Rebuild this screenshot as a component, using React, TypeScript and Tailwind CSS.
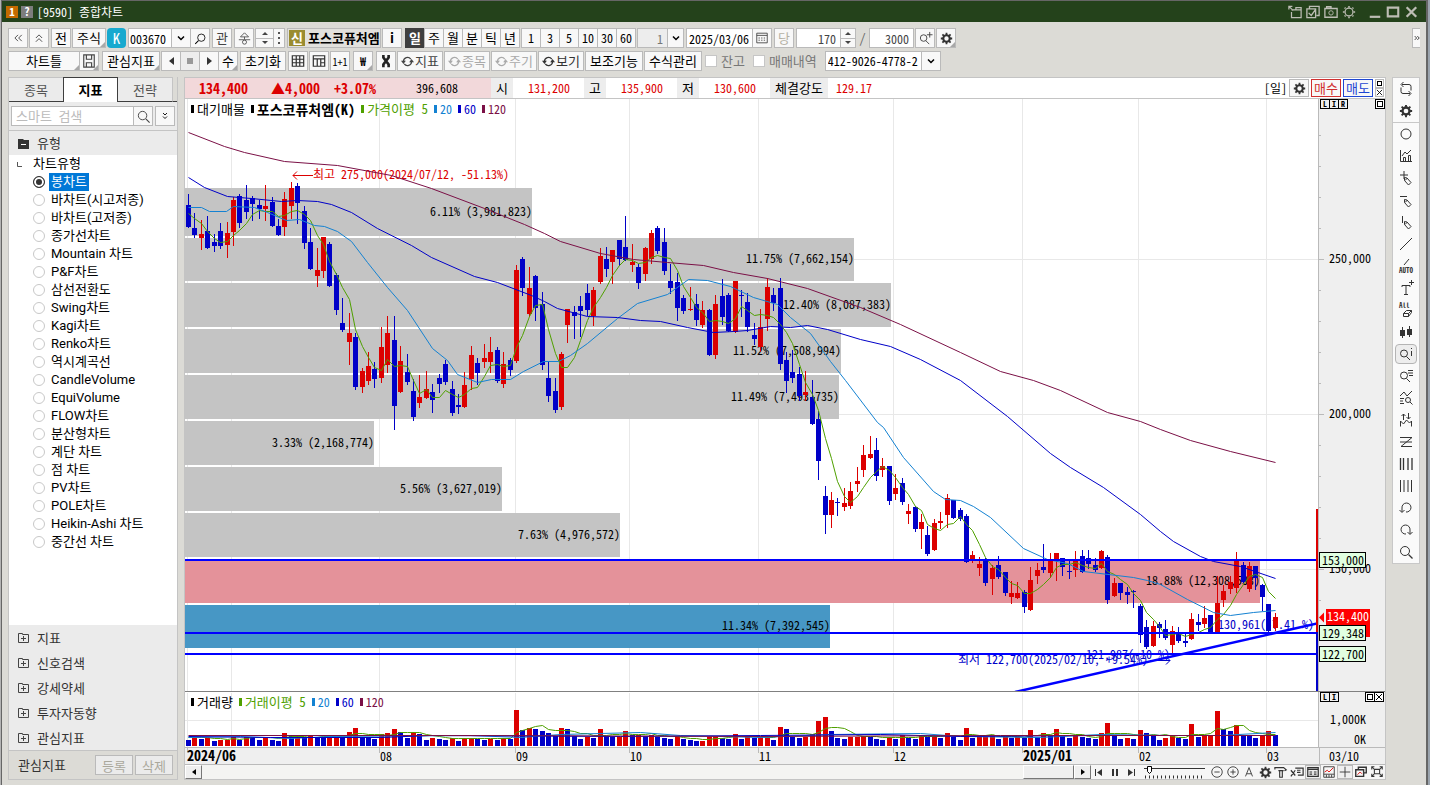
import { useState, type ReactNode } from "react";
import { clsx } from "clsx";
import { twMerge } from "tailwind-merge";

// [rising, high, body top, body bottom, low], y positions on the plot
type Candle = [number, number, number, number, number];

const CANDLES: Candle[] = [
  [0,194,205,227,227],[0,213,228,235,237],[1,220,234,238,249],[0,216,231,248,248],[0,234,242,246,251],
  [0,223,231,246,248],[1,222,233,245,257],[1,197,200,232,245],[0,194,196,223,227],[0,185,200,212,218],
  [0,196,198,204,220],[0,200,205,209,218],[1,185,206,209,220],[0,197,202,226,226],[0,219,226,235,235],
  [1,192,199,227,235],[1,182,188,206,218],[0,183,186,203,223],[0,206,211,243,248],[0,228,242,269,269],
  [1,248,270,276,286],[1,237,237,271,277],[0,242,244,286,286],[0,273,275,310,314],[0,298,323,330,331],
  [1,313,333,342,364],[0,333,337,387,389],[1,368,371,387,392],[1,352,366,381,384],[0,362,369,379,387],
  [1,327,347,378,382],[1,316,333,365,372],[0,316,340,406,429],[1,346,361,392,392],[0,354,372,382,384],
  [0,379,391,417,420],[1,375,397,403,407],[1,371,389,398,398],[0,384,392,400,412],[0,374,378,384,392],
  [0,360,364,382,384],[0,381,389,413,415],[0,394,405,407,413],[1,372,385,407,407],[1,346,355,379,389],
  [0,358,363,373,384],[1,344,358,362,367],[1,337,352,362,372],[0,347,350,381,382],[1,352,364,384,387],
  [0,358,360,370,375],[1,265,270,361,362],[0,257,259,288,295],[1,267,288,314,316],[0,275,276,308,320],
  [0,292,304,365,369],[0,361,378,396,401],[0,378,391,410,412],[1,352,354,407,409],[1,309,309,325,342],
  [0,306,312,316,338],[0,296,306,311,336],[0,284,293,310,315],[1,287,290,316,325],[1,248,256,282,283],
  [0,247,259,269,276],[1,250,250,262,283],[0,240,240,259,265],[0,216,247,260,260],[1,244,262,265,271],
  [0,264,267,283,288],[1,247,248,274,280],[1,230,233,259,263],[0,226,228,251,253],[0,228,242,271,274],
  [0,264,281,288,293],[0,273,282,308,320],[0,295,298,311,313],[1,287,309,310,310],[0,294,304,320,325],
  [1,301,310,325,327],[0,309,310,355,355],[1,295,304,355,358],[0,279,296,317,324],[0,293,295,331,331],
  [1,281,281,332,332],[0,290,295,296,316],[0,293,302,327,331],[0,323,335,339,344],[1,309,327,347,351],
  [1,278,287,319,330],[0,288,295,303,310],[0,278,288,364,369],[0,352,360,381,392],[0,350,372,378,382],
  [0,367,374,396,400],[1,371,392,395,400],[0,380,397,424,424],[0,411,419,461,479],[0,486,496,515,533],
  [1,492,500,515,527],[0,498,502,503,515],[1,488,503,507,510],[1,482,491,506,508],[1,467,481,484,491],
  [1,445,455,470,476],[1,436,454,458,458],[0,438,450,476,480],[1,458,466,470,476],[0,466,466,501,504],
  [1,474,488,494,499],[0,478,483,502,504],[1,504,511,514,523],[0,506,507,529,531],[1,514,522,529,548],
  [0,526,535,554,555],[1,519,523,550,550],[1,512,521,523,528],[1,494,498,515,527],[0,500,500,518,518],
  [0,508,510,519,520],[0,514,516,562,562],[1,551,555,560,562],[1,557,564,568,575],[0,558,561,583,585],
  [1,565,568,579,594],[0,556,565,577,578],[0,572,572,593,595],[1,581,593,597,603],[1,582,593,598,598],
  [0,590,592,607,612],[1,567,580,610,610],[1,563,570,576,583],[0,544,567,570,572],[1,553,560,573,577],
  [1,553,553,560,580],[0,558,558,567,575],[0,561,571,572,578],[1,551,560,570,576],[0,550,556,572,572],
  [0,550,558,564,568],[0,558,565,570,571],[1,550,551,568,568],[0,555,557,600,603],[1,578,583,596,596],
  [0,583,583,593,599],[0,587,592,595,603],[0,590,591,592,607],[0,604,606,635,642],[0,620,627,647,648],
  [1,621,626,646,646],[0,622,624,628,637],[0,620,629,638,639],[1,626,631,645,654],[0,627,632,641,642],
  [0,633,641,643,646],[1,613,619,639,639],[0,614,622,625,630],[1,606,618,624,627],[0,615,615,632,632],
  [1,576,603,632,632],[1,585,591,600,606],[1,576,582,589,593],[1,552,560,588,592],[0,562,565,582,582],
  [1,562,566,589,591],[0,566,566,578,589],[0,584,585,597,610],[0,604,604,631,632],[1,613,617,628,630],
];

const VOLUMES = [
  6,9,7,8,5,6,6,9,6,9,8,6,9,6,5,13,10,10,9,10,9,8,9,9,8,14,18,9,8,7,12,13,17,14,8,14,12,6,8,7,
  6,8,5,8,8,7,6,7,6,8,7,36,16,18,17,15,13,10,18,17,10,7,9,8,17,10,9,9,15,11,11,10,11,9,8,7,9,7,6,5,
  5,9,9,8,7,12,7,9,8,9,9,6,19,17,9,8,9,12,25,29,15,8,7,9,9,10,9,7,6,9,7,11,8,7,10,9,10,8,13,9,
  6,18,8,9,9,10,7,9,8,9,8,16,9,13,10,17,10,8,10,9,8,7,13,23,10,7,8,7,16,13,10,6,8,10,8,7,22,9,10,11,
  35,17,15,21,11,10,8,11,15,11,
];

const MA20 = "188,207 201,207 209,211 226,211 233,206 254,207 267,212 286,220 299,219 314,225 324,226 337,231 351,241 367,262 387,287 407,310 432,348 447,360 457,374 477,382 491,379 510,379 523,371 543,361 558,361 570,355 587,343 617,318 637,303 667,294 688,279 707,280 730,286 753,297 777,304 790,317 810,333 830,361 845,380 877,422 883,427 903,457 933,491 945,499 960,500 973,506 990,517 1023,548 1047,559 1067,563 1083,571 1133,577 1147,580 1160,584 1187,599 1213,612 1230,615 1253,612 1275,610";
const MA60 = "188,177 204,187 227,196 251,198 281,201 297,200 317,201 331,204 351,212 377,228 411,245 431,257 474,276 497,282 531,295 544,301 557,308 587,316 617,317 640,320 660,321 687,327 713,332 733,331 747,330 770,326 790,327 807,325 827,329 860,339 890,346 920,359 960,380 1007,416 1050,453 1070,467 1103,487 1140,514 1160,531 1173,541 1200,556 1213,561 1240,566 1275,578";
const MA120 = "188,132 224,146 244,152 284,161 337,165 391,175 431,188 484,208 524,224 544,233 560,241 600,253 633,259 667,262 703,265 733,272 767,278 807,288 860,307 900,324 960,352 1000,371 1033,380 1060,390 1107,412 1140,421 1160,429 1190,440 1230,451 1275,462";

const BANDS = [
  { y: 188, h: 48, end: 532, label: "6.11% (3,981,823)" },
  { y: 238, h: 43, end: 854, label: "11.75% (7,662,154)" },
  { y: 283, h: 44, end: 891, label: "12.40% (8,087,383)" },
  { y: 329, h: 44, end: 841, label: "11.52% (7,508,994)" },
  { y: 375, h: 44, end: 839, label: "11.49% (7,493,735)" },
  { y: 421, h: 44, end: 374, label: "3.33% (2,168,774)" },
  { y: 467, h: 44, end: 502, label: "5.56% (3,627,019)" },
  { y: 513, h: 44, end: 620, label: "7.63% (4,976,572)" },
  { y: 559, h: 44, end: 1260, label: "18.88% (12,308,533)", fill: "#e4929a" },
  { y: 605, h: 43, end: 830, label: "11.34% (7,392,545)", fill: "#4797c5" },
];

const MONTHS = [231, 379, 515, 629, 758, 893, 1022, 1138, 1266];
const DATES = [
  { x: 187, label: "2024/06", year: true },
  { x: 380, label: "08" },
  { x: 516, label: "09" },
  { x: 630, label: "10" },
  { x: 759, label: "11" },
  { x: 894, label: "12" },
  { x: 1023, label: "2025/01", year: true },
  { x: 1139, label: "02" },
  { x: 1267, label: "03" },
];

const RED = "#dc0000";
const BLUE = "#0000c8";
const GREEN = "#4fa000";
const CYAN = "#1482d2";
const WINE = "#7b1046";
const LINE = "#0000ff";

const candleX = (i: number) => 188 + Math.round(i * 6.43);

function average(values: number[], size: number, lead: number) {
  const padded = [...Array(size - 1).fill(lead), ...values];
  return values.map((_, i) => padded.slice(i, i + size).reduce((a, b) => a + b, 0) / size);
}

const MA5 = average(CANDLES.map(([up, , top, bottom]) => (up ? top : bottom)), 5, 210)
  .map((y, i) => `${candleX(i)},${Math.round(y)}`)
  .join(" ");
const VOL5 = average(VOLUMES, 5, 9)
  .map((v, i) => `${candleX(i)},${Math.round(745 - v)}`)
  .join(" ");

/* ---------- icons ---------- */

function Icon({ size = 16, children }: { size?: number; children: ReactNode }) {
  return (
    <svg width={size} height={size} viewBox="0 0 16 16" fill="none" stroke="currentColor" className="shrink-0" aria-hidden="true">
      {children}
    </svg>
  );
}

const Gear = ({ size = 14 }: { size?: number }) => (
  <Icon size={size}>
    <circle cx="8" cy="8" r="4" strokeWidth="2.6" />
    <path d="M8 1v3M8 12v3M1 8h3M12 8h3M3 3l2 2M11 11l2 2M3 13l2-2M11 5l2-2" strokeWidth="2.2" />
  </Icon>
);
const Search = ({ size = 16 }: { size?: number }) => (
  <Icon size={size}><circle cx="7" cy="7" r="4.5" /><path d="M10.500 10.500l4 4" strokeWidth="1.300" /></Icon>
);
const Chevron = () => <Icon size={12}><path d="M4 6l4 4 4-4" strokeWidth="2" /></Icon>;
const Cycle = () => (
  <Icon size={13}>
    <path d="M3 8a5 5 0 0 1 9-3M13 8a5 5 0 0 1-9 3" strokeWidth="1.600" />
    <path d="M0 7h6L3 11zM10 9h6l-3-4z" fill="currentColor" stroke="none" />
  </Icon>
);
const Pencil = () => <path d="M6.500 7.500v3l4 4.500 2.500-2.500-4-4.500zM7 10.500l2.500-2.500" />;
const MiniSearch = () => <><circle cx="6" cy="7.500" r="3.500" /><path d="M8.500 10.500L12 14" /></>;

const SIDE_ICONS: { name: string; icon: ReactNode }[] = [
  { name: "새로고침", icon: <Icon><path d="M4 3.500h7q2 0 2 2v4M3 6.500v4q0 2 2 2h7M5.500 1L3 3.500 5.500 6M10.500 10l2.500 2.500-2.500 2.500" /></Icon> },
  { name: "설정", icon: <Gear /> },
  { name: "원", icon: <Icon><circle cx="8" cy="8" r="5" /></Icon> },
  { name: "차트", icon: <Icon><path d="M2.500 2v11.500H14M5.500 13V9.500h2V13M10.500 13V7.500h2V13M4 8l3-4 2 2 4-4" /></Icon> },
  { name: "십자선", icon: <Icon><path d="M6 1v8M2 5h8" /><Pencil /></Icon> },
  { name: "수평선", icon: <Icon><path d="M2 4.500h7" /><Pencil /></Icon> },
  { name: "수직선", icon: <Icon><path d="M4.500 2v7" /><Pencil /></Icon> },
  { name: "추세선", icon: <Icon><path d="M2 14L14 2" /></Icon> },
  { name: "자동추세선", icon: <Icon><path d="M6 7l5-6" /><text x="8" y="15" textAnchor="middle" fontSize="7" fontWeight="700" fill="currentColor" stroke="none">AUTO</text></Icon> },
  { name: "문자", icon: <Icon><path d="M4 7V5.500h8V7M8 5.500V14M6 14.500h4M13.500 0v5M11 2.500h5" /></Icon> },
  { name: "모두 지우기", icon: <Icon><text x="1" y="6" fontSize="7" fontWeight="700" fill="currentColor" stroke="none">All</text><path d="M5.500 11.500l3-3h5l-3 3zM5.500 11.500v3h5v-3M13.500 8.500v2l-3 4" /></Icon> },
  { name: "봉", icon: <Icon><path d="M4.500 3v11M11.500 2v11" /><path d="M2 6h5v6H2zM9 5h5v6H9z" fill="currentColor" stroke="none" /></Icon> },
  { name: "정보", icon: <Icon><MiniSearch /><path d="M13.500 2v1M13.500 5v5" /></Icon> },
  { name: "목록", icon: <Icon><MiniSearch /><path d="M10 2.500h5M10 5h5M11 7.500h4" /></Icon> },
  { name: "지표찾기", icon: <Icon><path d="M2 6l4-4 3 4 5-5M2 8.500h4M2 11h3M2 13.500h4" /><circle cx="10" cy="10" r="2.500" /><path d="M12 12l2.500 2.500" /></Icon> },
  { name: "패턴", icon: <Icon><path d="M2.500 14.500V9l3 3 3-4 3 3 2-2v5.500M5.500 8V2M3.500 4l2-2 2 2M10.500 1v6M8.500 5l2 2 2-2" /></Icon> },
  { name: "파동", icon: <Icon><path d="M2 3.500h12L3 12.500h11M2 8h12" /></Icon> },
  { name: "기간", icon: <Icon><path d="M2.500 2v12M5.500 2v12M10 2v12M14 2v12" strokeWidth="1.300" /></Icon> },
  { name: "등간격", icon: <Icon><path d="M2.500 2v12M6 2v12M10 2v12M13.500 2v12" /></Icon> },
  { name: "되돌리기", icon: <Icon><path d="M4 12V8a4.500 4.500 0 1 1 4 4M1.500 10L4 12.500 6.500 10" /></Icon> },
  { name: "다시하기", icon: <Icon><path d="M12 12V8a4.500 4.500 0 1 0-4 4M9.500 10l2.500 2.500 2.500-2.500" /></Icon> },
  { name: "확대", icon: <Search /> },
];

const BOTTOM_ICONS: { name: string; icon: ReactNode; on?: boolean }[] = [
  { name: "축소", icon: <Icon size={14}><circle cx="8" cy="8" r="6" /><path d="M5 8h6" /></Icon> },
  { name: "확대", icon: <Icon size={14}><circle cx="8" cy="8" r="6" /><path d="M5 8h6M8 5v6" /></Icon> },
  { name: "글자", icon: <Icon size={14}><path d="M4 13l4-10 4 10M5.500 10h5" /></Icon> },
  { name: "설정", icon: <Gear size={13} /> },
  { name: "도구", icon: <Icon size={14}><path d="M1 5V3h10l3 2.500-2 1M5 6.500h6M6.500 6.500v7.500h3V6.500" strokeWidth="1.300" /></Icon> },
  { name: "지우기", icon: <Icon size={14}><path d="M6 3.500h9v8H9M1 6l5 6M6 6l-5 7M8 6h4M8 8.500h4" strokeWidth="1.400" /></Icon> },
  { name: "데이터", on: true, icon: <Icon size={14}><path d="M2 3h12v10H2zM2 5h12M4 8h3M4 10.500h3M9 8h3M9 10.500h3" strokeWidth="1.400" /></Icon> },
  { name: "차트", icon: <Icon size={14}><path d="M2 2h12v12H2zM2 10.500h12M5 11v3M8 11v3M11 11v3" /><path d="M3 8l3-2 2 2 5-5" stroke="#dc0000" /></Icon> },
  { name: "십자", on: true, icon: <Icon size={14}><path d="M8 2v12M2 8h12" /></Icon> },
  { name: "겹치기", icon: <Icon size={14}><path d="M5 5V2.500h9V9h-3M2 5.500h9V13H2z" strokeWidth="1.600" /><path d="M4 11l3-3 2 2" stroke="#dc0000" /></Icon> },
  { name: "전체화면", icon: <Icon size={14}><path d="M2 5V2h3M11 2h3v3M14 10v3h-3M5 13H2v-3M2 2l3 3M14 2l-3 3M2 13l3-3M14 13l-3-3M5 5h6v5H5z" strokeWidth="1.200" /></Icon> },
];

/* ---------- controls ---------- */

function Btn({ className, children, label, corner }: { className?: string; children?: ReactNode; label?: string; corner?: boolean }) {
  return (
    <button
      type="button"
      aria-label={label}
      className={twMerge("relative flex h-5 shrink-0 items-center justify-center border border-[#bababa] bg-[#f8f8f8] whitespace-nowrap", className)}
    >
      {children}
      {corner && (
        <svg width="5" height="5" className="absolute right-0 bottom-0" aria-hidden="true"><path d="M5 0v5H0z" fill="#a8a8a8" /></svg>
      )}
    </button>
  );
}

function Spinner({ className }: { className?: string }) {
  return (
    <div className={clsx("flex h-5 shrink-0 flex-col border border-[#bababa] bg-[#f8f8f8]", className)}>
      <button type="button" aria-label="증가" className="flex flex-1 items-center justify-center border-b border-[#bababa]">
        <svg width="6" height="4"><path d="M0 4l3-3 3 3z" fill="#444" /></svg>
      </button>
      <button type="button" aria-label="감소" className="flex flex-1 items-center justify-center">
        <svg width="6" height="4"><path d="M0 0l3 3 3-3z" fill="#444" /></svg>
      </button>
    </div>
  );
}

function TitleBar() {
  return (
    <header className="flex h-[22px] items-center border-t border-[#666] bg-[#24421b] pr-2 pl-1 text-white">
      <span className="flex h-3 w-3 items-center justify-center bg-[#c46a00] text-[11px] font-bold">1</span>
      <span className="ml-[3px] flex h-3 w-3 items-center justify-center bg-[#7d7d7d] text-[11px] font-bold">?</span>
      <h1 className="ml-1 text-[12px] leading-4">[9590] 종합차트</h1>
      <div className="ml-auto flex items-center gap-1 text-[#bdbdb5]">
        <button type="button" aria-label="창 분리"><Icon size={14}><path d="M4 5.500h11v9H4V8M9 5.500V3h6v2.500M1 5V1.500h4M1 1.500l5 5" strokeWidth="1.400" /></Icon></button>
        <button type="button" aria-label="선택"><Icon size={14}><path d="M1 4.500h10v10H1zM4 4V1.500h11V12h-3M3 9l3 3 5-7" strokeWidth="1.500" /></Icon></button>
        <button type="button" aria-label="화면 캡처"><Icon size={14}><path d="M1 4h14v10H1zM3 4V2h5v2" strokeWidth="1.500" /><circle cx="8" cy="9" r="2.500" /></Icon></button>
        <button type="button" aria-label="화면 설정">
          <Icon size={14}><circle cx="8" cy="8" r="4.500" strokeWidth="1.400" /><path d="M8 1v2M8 13v2M1 8h2M13 8h2M3 3l1 1M12 12l1 1M3 13l1-1M12 4l1-1" strokeWidth="1.800" /></Icon>
        </button>
        <button type="button" aria-label="최소화" className="ml-2"><Icon size={14}><path d="M2 13.500h12" strokeWidth="2.500" /></Icon></button>
        <button type="button" aria-label="최대화"><Icon size={14}><path d="M2 3h12v10H2z" strokeWidth="2.400" /></Icon></button>
        <button type="button" aria-label="닫기"><Icon size={14}><path d="M3 2.500l11 11M14 2.500l-11 11" strokeWidth="2.600" /></Icon></button>
      </div>
    </header>
  );
}

function Toolbars() {
  return (
    <div className="flex flex-col gap-[3px] px-[6px] pt-[6px] pb-[6px]">
      <div className="flex">
        <Btn className="w-5 text-[#555]" label="처음"><Icon size={10}><path d="M8 3L3 8l5 5M14 3L9 8l5 5" strokeWidth="1.600" /></Icon></Btn>
        <Btn className="ml-px w-5 text-[#555]" label="위로"><Icon size={10}><path d="M3 8l5-5 5 5M3 14l5-5 5 5" strokeWidth="1.600" /></Icon></Btn>
        <Btn className="ml-0.5 w-5">전</Btn>
        <Btn className="ml-px w-[34px]" corner>주식</Btn>
        <button type="button" className="mr-0.5 ml-px flex h-5 w-[19px] shrink-0 items-center justify-center rounded-sm bg-[#17a9cf] text-[15px] text-white">K</button>
        <input aria-label="종목코드" defaultValue="003670" className="h-5 w-11 shrink-0 border border-[#bababa] bg-white px-px text-[12px]" />
        <Btn className="-ml-px w-5" label="종목 목록"><Chevron /></Btn>
        <Btn className="-ml-px w-5" label="종목 검색"><span className="-scale-x-100"><Search size={13} /></span></Btn>
        <Btn className="ml-0.5 w-5 text-[#444]">관</Btn>
        <Btn className="ml-0.5 w-5 text-[#444]" label="순서">
          <Icon size={13}><path d="M8 1L3 6h10zM8 6v3M1 9.500h14" /><circle cx="8" cy="12.500" r="2.500" /></Icon>
        </Btn>
        <Spinner className="ml-px w-[19px]" />
        <Btn className="-ml-px w-3" label="더보기"><svg width="2" height="12"><path d="M0 0h2v2H0zM0 5h2v2H0zM0 10h2v2H0z" fill="#555" /></svg></Btn>
        <div className="ml-0.5 flex h-5 w-[94px] shrink-0 items-center overflow-hidden border border-[#bababa] bg-[#e2e1dd] whitespace-nowrap">
          <span className="ml-px flex h-4 w-4 shrink-0 items-center justify-center bg-[#9a8c30] font-bold text-white">신</span>
          <span className="ml-[3px] font-bold">포스코퓨처엠</span>
        </div>
        <Btn className="ml-px w-5 font-bold">i</Btn>
        <Btn className="ml-[3px] w-5 border-[#3e3e3e] bg-[#3e3e3e] font-bold text-white">일</Btn>
        {["주", "월", "분", "틱", "년"].map((t) => <Btn key={t} className="-ml-px w-5">{t}</Btn>)}
        <Btn className="ml-px w-5 text-[12px]">1</Btn>
        {["3", "5", "10", "30", "60"].map((t) => <Btn key={t} className="-ml-px w-5 text-[12px]">{t}</Btn>)}
        <input aria-label="분 단위" defaultValue="1" className="ml-px h-5 w-[31px] shrink-0 border border-[#bababa] bg-[#ededed] px-1 text-right text-[12px] text-[#777]" />
        <Btn className="-ml-px w-[17px]" label="분 목록"><Chevron /></Btn>
        <input aria-label="기준일" defaultValue="2025/03/06" className="ml-0.5 h-5 w-[67px] shrink-0 border border-[#bababa] bg-white px-0.5 text-[12px]" />
        <Btn className="-ml-px w-5 text-[#444]" label="달력">
          <Icon size={14}><path d="M2 2.500h12v11H2zM2 5h12" /><path d="M4 8h8M4 10.500h8" strokeDasharray="1.500 1.500" /></Icon>
        </Btn>
        <Btn className="ml-0.5 w-5 text-[#b5b1a5]">당</Btn>
        <input aria-label="봉 개수" defaultValue="170" className="ml-0.5 h-5 w-[45px] shrink-0 border border-[#bababa] bg-white px-1 text-right text-[12px] text-[#444]" />
        <Spinner className="-ml-px w-4" />
        <span className="w-[13px] shrink-0 text-center leading-5 text-[#666]">/</span>
        <input aria-label="전체 개수" defaultValue="3000" className="h-5 w-[45px] shrink-0 border border-[#bababa] bg-white px-1 text-right text-[12px] text-[#444]" />
        <Btn className="ml-px w-5 text-[#444]" label="찾기 추가"><Icon size={15}><MiniSearch /><path d="M12.500 1v6M9.500 4h6" /></Icon></Btn>
        <Btn className="ml-px w-5 text-[#333]" label="차트 설정" corner><Gear size={13} /></Btn>
        <Btn className="ml-auto w-2 border-r-0" label="펼치기"><Icon size={6}><path d="M2 3l5 5-5 5M9 3l5 5-5 5" strokeWidth="2" /></Icon></Btn>
      </div>
      <div className="flex">
        <Btn className="w-[72px]" corner>차트틀</Btn>
        <Btn className="-ml-px w-5 text-[#444]" label="저장" corner><Icon size={14}><path d="M2 1h12v14H2zM5 1v5h6V1M5 15v-5h6v5" strokeWidth="1.300" /></Icon></Btn>
        <Btn className="ml-[3px] w-[58px]" corner>관심지표</Btn>
        <Btn className="ml-px w-5" label="이전"><svg width="5" height="8"><path d="M5 0v8L0 4z" fill="#333" /></svg></Btn>
        <Btn className="-ml-px w-5 bg-[#ededed]" label="정지"><span className="h-1.5 w-1.5 bg-[#999]" /></Btn>
        <Btn className="-ml-px w-5" label="다음"><svg width="5" height="8"><path d="M0 0v8l5-4z" fill="#333" /></svg></Btn>
        <Btn className="-ml-px w-5" corner>수</Btn>
        <Btn className="ml-0.5 w-[46px]">초기화</Btn>
        <Btn className="ml-0.5 w-5 text-[#333]" label="격자"><Icon size={14}><path d="M1.500 2h13v12h-13zM1.500 6h13M1.500 10h13M6 2v12M10 2v12" strokeWidth="1.400" /></Icon></Btn>
        <Btn className="ml-px w-5 text-[#333]" label="분할"><Icon size={14}><path d="M1.500 2h13v12h-13zM1.500 5.500h13M6 6v8M10 6v8M10 10h4" strokeWidth="1.400" /></Icon></Btn>
        <Btn className="ml-px w-5 text-[10px]">1+1</Btn>
        <Btn className="ml-[3px] w-5 text-[12px] font-bold" corner>₩</Btn>
        <Btn className="ml-[3px] w-5 text-[#222]" label="도구"><Icon size={14}><path d="M5 1v3l6 8v3M11 1v3l-6 8v3" strokeWidth="3" /></Icon></Btn>
        <Btn className="ml-px w-[46px] gap-px text-[#444]"><Cycle />지표</Btn>
        <Btn className="ml-px w-[46px] gap-px text-[#aaa]"><Cycle />종목</Btn>
        <Btn className="ml-px w-[46px] gap-px text-[#aaa]"><Cycle />주기</Btn>
        <Btn className="ml-px w-[46px] gap-px text-[#333]"><Cycle />보기</Btn>
        <Btn className="ml-px w-[58px]">보조기능</Btn>
        <Btn className="ml-px w-[58px]">수식관리</Btn>
        <label className="ml-[3px] flex shrink-0 items-center gap-1 text-[#777]">
          <input type="checkbox" className="h-3 w-3 appearance-none border border-[#c6c6c6] bg-white" />잔고
        </label>
        <label className="ml-2 flex shrink-0 items-center gap-1 text-[#777]">
          <input type="checkbox" className="h-3 w-3 appearance-none border border-[#c6c6c6] bg-white" />매매내역
        </label>
        <div className="relative ml-2 flex h-5 w-[116px] shrink-0 border border-[#bababa] bg-white">
          <select aria-label="계좌번호" className="w-full appearance-none bg-transparent pl-0.5 text-[12px]">
            <option>412-9026-4778-2</option>
          </select>
          <span className="pointer-events-none absolute top-0 right-0 flex h-full w-[19px] items-center justify-center border-l border-[#bababa] bg-[#f8f8f8]"><Chevron /></span>
        </div>
      </div>
    </div>
  );
}

const TYPES = [
  "봉차트", "바차트(시고저종)", "바차트(고저종)", "종가선차트", "Mountain 차트", "P&F차트", "삼선전환도",
  "Swing차트", "Kagi차트", "Renko차트", "역시계곡선", "CandleVolume", "EquiVolume", "FLOW차트",
  "분산형차트", "계단 차트", "점 차트", "PV차트", "POLE차트", "Heikin-Ashi 차트", "중간선 차트",
];

function SidePanel() {
  const [selected, setSelected] = useState("봉차트");

  return (
    <aside className="flex w-[170px] shrink-0 flex-col border-x border-b border-[#c4c4c4] bg-[#ebebeb]">
      <div className="flex h-[25px]">
        <button type="button" className="w-[54px] border-t border-b border-t-[#c4c4c4] border-b-[#3e3e3e] text-[#555]">종목</button>
        <button type="button" className="w-[55px] border border-b-0 border-[#3e3e3e] bg-white font-bold">지표</button>
        <button type="button" className="w-[55px] border-t border-r border-b border-t-[#c4c4c4] border-r-[#c4c4c4] border-b-[#3e3e3e] text-[#555]">전략</button>
        <div className="flex-1 border-b border-[#3e3e3e] bg-[#dcdbd6]" />
      </div>
      <div className="flex gap-0.5 px-0.5 pt-1 pb-1">
        <div className="flex h-5 flex-1 border border-[#bababa] bg-white">
          <input aria-label="검색" placeholder="스마트 검색" className="w-0 flex-1 px-1 placeholder:text-[#bbb]" />
          <button type="button" aria-label="검색" className="flex w-[19px] items-center justify-center border-l border-[#bababa] bg-[#f8f8f8] text-[#444]"><Search size={15} /></button>
        </div>
        <Btn className="w-5" label="펼치기"><Icon size={8}><path d="M4 2l4 4 4-4M4 9l4 4 4-4" strokeWidth="1.800" /></Icon></Btn>
      </div>
      <div className="flex h-[25px] items-center border-t border-[#c4c4c4] pl-[9px] text-[#333]">
        <svg width="11" height="11" className="mr-2"><path d="M0 1h5l1 1h5v9H0z" fill="#333" /><path d="M3 6.500h5" stroke="#fff" /></svg>
        유형
      </div>
      <div className="flex-1 bg-white [font-family:Roboto,'Noto_Sans_CJK_KR',sans-serif] leading-[18px]">
        <div className="flex items-center pl-2">
          <svg width="5" height="5" className="mr-[11px]"><path d="M.5 0v4.500H5" fill="none" stroke="#555" /></svg>
          차트유형
        </div>
        {TYPES.map((t) => (
          <label key={t} className="flex h-[18px] items-center gap-1 pl-6">
            <input
              type="radio"
              name="type"
              checked={selected === t}
              onChange={() => setSelected(t)}
              className="h-3 w-3 appearance-none rounded-full border border-[#c8c8c8] bg-white checked:border-[#333] checked:bg-[#333] checked:shadow-[inset_0_0_0_2px_white]"
            />
            <span className={clsx("px-0.5", selected === t && "bg-[#0078d7] text-white")}>{t}</span>
          </label>
        ))}
      </div>
      {["지표", "신호검색", "강세약세", "투자자동향", "관심지표"].map((t) => (
        <button key={t} type="button" className="flex h-[25px] items-center pl-[9px] text-[#333]">
          <svg width="11" height="11" className="mr-2" fill="none" stroke="#444"><path d="M.5 1.500h4v1h6v8H.5zM5.500 4v5M3 6.500h5" /></svg>
          {t}
        </button>
      ))}
      <div className="flex h-[29px] items-center border-t border-[#c4c4c4] bg-[#dcdbd6] pr-1 pl-[9px] text-[#333]">
        관심지표
        <button type="button" className="ml-auto h-5 w-[38px] border border-[#bababa] bg-[#ebebeb] text-[#aaa89c]">등록</button>
        <button type="button" className="ml-0.5 h-5 w-[38px] border border-[#bababa] bg-[#ebebeb] text-[#aaa89c]">삭제</button>
      </div>
    </aside>
  );
}

function StatsBar() {
  return (
    <div className="flex h-[21px] shrink-0 items-stretch border-b border-[#c4c4c4] bg-white leading-5">
      <div className="flex w-[306px] bg-[#f2d8da] text-[14px] font-bold text-[#dc0000]">
        <span className="w-[63px] text-right">134,400</span>
        <span className="w-[72px] text-right">▲4,000</span>
        <span className="w-[56px] text-right">+3.07%</span>
        <span className="flex-1 pr-[33px] text-right text-[12px] font-normal text-black">396,608</span>
      </div>
      {[["시", "131,200"], ["고", "135,900"], ["저", "130,600"]].map(([k, v]) => (
        <div key={k} className="flex w-[93px]">
          <span className="w-[22px] bg-[#ededed] text-center">{k}</span>
          <span className="flex-1 pr-[14px] text-right text-[12px] text-[#dc0000]">{v}</span>
        </div>
      ))}
      <span className="w-[58px] bg-[#ededed] text-center">체결강도</span>
      <span className="pl-2 text-[12px] text-[#dc0000]">129.17</span>
      <div className="ml-auto flex items-center gap-0.5 pr-px">
        <span className="text-[12px]">[일]</span>
        <button type="button" aria-label="설정" className="flex h-[18px] w-5 items-center justify-center border border-[#bababa] bg-[#f8f8f8] text-[#333]"><Gear size={13} /></button>
        <button type="button" className="flex h-[18px] w-[30px] items-center justify-center border border-[#d03030] bg-[#f8f8f8] text-[#d03030]">매수</button>
        <button type="button" className="flex h-[18px] w-[30px] items-center justify-center border border-[#1e46d2] bg-[#f8f8f8] text-[#1e46d2]">매도</button>
        <div className="flex flex-col">
          <button type="button" aria-label="최대화" className="flex h-[9px] w-[9px] items-center justify-center border border-[#bababa]"><span className="h-[5px] w-[5px] border border-black" /></button>
          <button type="button" aria-label="닫기" className="flex h-[9px] w-[9px] items-center justify-center border border-[#bababa]"><Icon size={7}><path d="M2 2l12 12M14 2L2 14" strokeWidth="2" /></Icon></button>
        </div>
      </div>
    </div>
  );
}

function Legend({ items }: { items: { text: string; color: string; bold?: boolean }[] }) {
  return (
    <div className="absolute top-px left-[6px] flex gap-[6px] leading-[18px]">
      {items.map((item) => (
        <span
          key={item.text}
          className={clsx("flex items-center gap-[3px]", item.bold && "text-[14px] font-bold", /^\d+$/.test(item.text) && "text-[12px]")}
          style={{ color: item.color }}
        >
          <span className="h-2 w-[3px]" style={{ background: item.color }} />
          {item.text}
        </span>
      ))}
    </div>
  );
}

function Badges({ letters, close }: { letters: string[]; close?: boolean }) {
  return (
    <div className="absolute inset-x-px top-0 flex h-[10px] text-[8px] leading-2 font-bold">
      {letters.map((l) => <button key={l} type="button" className="-mr-px w-[10px] border border-black bg-[#efefef]">{l}</button>)}
      <button type="button" aria-label="확대" className="-mr-px ml-auto flex w-[10px] items-center justify-center border border-black bg-white"><span className="h-[6px] w-[6px] border border-black" /></button>
      {close && <button type="button" aria-label="닫기" className="flex w-[10px] items-center justify-center border border-black bg-white"><Icon size={8}><path d="M2 2l12 12M14 2L2 14" strokeWidth="2" /></Icon></button>}
    </div>
  );
}

function PricePlot() {
  return (
    <svg className="block h-full w-full" fontSize="12">
      <g transform="translate(-185 -99)">
        <g fill="#e8e8e8">
          <rect x="187" y="99" width="1" height="592" />
          {MONTHS.map((x) => <rect key={x} x={x} y="99" width="1" height="592" />)}
          {[259, 414, 569].map((y) => <rect key={y} x="185" y={y} width="1134" height="1" />)}
        </g>
        {BANDS.map((b) => <rect key={b.y} x="185" y={b.y} width={b.end - 185} height={b.h} fill={b.fill ?? "#c4c4c4"} />)}
        {BANDS.map((b) => <text key={b.y} x={b.end} y={b.y + Math.floor(b.h / 2) + 4} textAnchor="end">{b.label}</text>)}
        <g fill={RED}>
          <path d="M293 175.500h20M297 171.500l-4 4 4 4" fill="none" stroke={RED} />
          <text x="313" y="179">최고 275,000(2024/07/12, -51.13%)</text>
        </g>
        <g fill={BLUE}>
          <text x="1218" y="629">130,961(-7.41 %)</text>
          <text x="1086" y="659">121,987(-10 %)</text>
          <text x="958" y="664">최저 122,700(2025/02/10, +9.54%)</text>
          <path d="M1150 660.500h20M1166 656.500l4 4-4 4" fill="none" stroke={BLUE} />
        </g>
        {CANDLES.map(([up, high, top, bottom, low], i) => (
          <g key={i} fill={up ? RED : BLUE}>
            <rect x={candleX(i)} y={high} width="1" height={low - high + 1} />
            <rect x={candleX(i) - 2} y={top} width="5" height={Math.max(bottom - top, 1)} />
          </g>
        ))}
        <g fill="none" transform="translate(.5 .5)">
          <polyline points={MA5} stroke={GREEN} />
          <polyline points={MA20} stroke={CYAN} />
          <polyline points={MA60} stroke={BLUE} />
          <polyline points={MA120} stroke={WINE} />
        </g>
        <g fill={LINE}>
          <rect x="185" y="559" width="1134" height="2" />
          <rect x="185" y="632" width="1134" height="2" />
          <rect x="185" y="653" width="1134" height="2" />
        </g>
        <path d="M1015 692L1319 623" stroke={LINE} strokeWidth="2.500" />
        <rect x="1316" y="509" width="3" height="123" fill={RED} />
        <rect x="1316" y="632" width="3" height="60" fill={BLUE} />
      </g>
    </svg>
  );
}

function PriceAxis() {
  return (
    <svg className="block h-full w-full" fontSize="12">
      <g transform="translate(-1320 -99)">
        {Array.from({ length: 17 }, (_, i) => (
          <rect key={i} x="1320" y={135 + i * 31} width={i % 5 === 4 ? 5 : 2} height="1" fill="#bababa" />
        ))}
        <text x="1330" y="263">250,000</text>
        <text x="1330" y="418">200,000</text>
        <text x="1330" y="573">150,000</text>
        <path d="M1320 617.500l5-5v10z" fill="#ff0000" />
        <rect x="1327" y="609" width="44" height="28" fill="#ff0000" />
        <text x="1328" y="621" fill="#fff">134,400</text>
        {[["153,000", 552], ["129,348", 625], ["122,700", 646]].map(([t, y]) => (
          <g key={t}>
            <rect x="1320.500" y={Number(y) + 0.5} width="46" height="15" fill="#e1ffe1" stroke="#000" />
            <text x="1323" y={Number(y) + 13}>{t}</text>
          </g>
        ))}
      </g>
    </svg>
  );
}

function VolumePlot() {
  return (
    <svg className="block h-full w-full">
      <g transform="translate(-185 -692)">
        <g fill="#e8e8e8">
          <rect x="187" y="693" width="1" height="54" />
          {MONTHS.map((x) => <rect key={x} x={x} y="693" width="1" height="54" />)}
          <rect x="185" y="720" width="1134" height="1" />
        </g>
        {VOLUMES.map((v, i) => (
          <rect key={i} x={candleX(i) - 2} y={746 - v} width="5" height={v} fill={i > 0 && v >= VOLUMES[i - 1] ? RED : BLUE} />
        ))}
        <g fill="none" transform="translate(.5 .5)">
          <polyline points={VOL5} stroke={GREEN} />
          <polyline points="188,737 240,736 290,738 330,736 470,735 520,737 560,734 640,732 680,735 760,737 830,734 920,733 960,736 1040,737 1100,734 1170,735 1220,735 1275,732" stroke={CYAN} />
          <polyline points="188,736 270,737 380,737 430,735 620,736 760,735 880,734 960,736 1100,735 1275,735" stroke={BLUE} />
          <polyline points="188,735 480,735 760,736 1000,735 1275,735" stroke={WINE} />
        </g>
      </g>
    </svg>
  );
}

function DateRow() {
  return (
    <div className="flex h-[17px] shrink-0 border-t border-[#bababa] bg-[#efefef] text-[12px]">
      <svg className="block h-full min-w-0 flex-1 overflow-visible">
        <g transform="translate(-185 0)">
          {[187, ...MONTHS.slice(1)].map((x) => <rect key={x} x={x} width="1" height="5" fill="#bababa" />)}
          {DATES.map((d) => (
            <text key={d.x} x={d.x} y="13" fontSize={d.year ? 14 : 12} fontWeight={d.year ? 700 : 400}>{d.label}</text>
          ))}
        </g>
      </svg>
      <div className="w-[66px] shrink-0 border-l border-[#bababa] pl-[9px] leading-4">03/10</div>
    </div>
  );
}

function ScrollRow() {
  return (
    <div className="flex h-[15px] shrink-0 border-t border-[#bababa] bg-[#f6f6f6] text-[#333]">
      <button type="button" aria-label="왼쪽" className="flex w-[17px] items-center justify-center border border-t-white border-r-[#777] border-b-[#777] border-l-white bg-[#efefef]"><svg width="4" height="6"><path d="M4 0v6L0 3z" /></svg></button>
      <div className="flex flex-1 justify-end bg-[#f4f4f2]">
        <div className="w-[51px] border border-t-white border-r-[#777] border-b-[#777] border-l-white bg-[#efefef]" />
      </div>
      <button type="button" aria-label="오른쪽" className="flex w-[17px] items-center justify-center border border-t-white border-r-[#777] border-b-[#777] border-l-white bg-[#efefef]"><svg width="4" height="6"><path d="M0 0v6l4-3z" /></svg></button>
      <div className="flex items-center">
        <button type="button" aria-label="처음으로" className="flex w-4 justify-center"><svg width="8" height="7"><path d="M0 0h1v7H0zM7 0v7L2 3.500z" fill="#333" /></svg></button>
        <button type="button" aria-label="일시정지" className="flex w-4 justify-center"><svg width="6" height="7"><path d="M0 0h2v7H0zM4 0h2v7H4z" fill="#333" /></svg></button>
        <button type="button" aria-label="끝으로" className="flex w-4 justify-center"><svg width="8" height="7"><path d="M7 0h1v7H7zM1 0v7l5-3.500z" fill="#333" /></svg></button>
        <svg width="62" height="14" className="mr-[3px] ml-[5px]" aria-hidden="true">
          <path d="M0 3.500h61" stroke="#333" />
          <path d="M1 12h60" stroke="#333" strokeWidth="3" strokeDasharray="1 3" />
          <path d="M3.500 1.500h4v5l-2 2-2-2z" fill="#fff" stroke="#000" />
        </svg>
        {BOTTOM_ICONS.map(({ name, icon, on }) => (
          <button key={name} type="button" aria-label={name} className={clsx("flex h-[14px] w-4 items-center justify-center", on && "border border-[#bababa] bg-[#efefef]")}>{icon}</button>
        ))}
      </div>
    </div>
  );
}

function ChartPanel() {
  return (
    <main className="flex min-w-0 flex-1 flex-col border border-[#c4c4c4] bg-white">
      <StatsBar />
      <div className="flex min-h-0 flex-1">
        <section className="relative min-w-0 flex-1">
          <PricePlot />
          <Legend
            items={[
              { text: "대기매물", color: "#000" },
              { text: "포스코퓨처엠(K)", color: "#000", bold: true },
              { text: "가격이평 5", color: GREEN },
              { text: "20", color: CYAN },
              { text: "60", color: BLUE },
              { text: "120", color: WINE },
            ]}
          />
        </section>
        <div className="relative w-[67px] shrink-0 border-l border-[#bababa] bg-[#efefef]">
          <PriceAxis />
          <Badges letters={["L", "I", "R"]} />
        </div>
      </div>
      <div className="flex h-14 shrink-0 border-t border-[#808080]">
        <section className="relative min-w-0 flex-1">
          <VolumePlot />
          <Legend
            items={[
              { text: "거래량", color: "#000" },
              { text: "거래이평 5", color: GREEN },
              { text: "20", color: CYAN },
              { text: "60", color: BLUE },
              { text: "120", color: WINE },
            ]}
          />
        </section>
        <div className="relative w-[67px] shrink-0 border-l border-[#bababa] bg-[#efefef] pt-[17px] pr-[19px] text-right text-[12px] leading-5">
          <div>1,000K</div>
          <div>0K</div>
          <Badges letters={["L", "I"]} close />
        </div>
      </div>
      <DateRow />
      <ScrollRow />
    </main>
  );
}

function IconRail() {
  return (
    <nav className="flex w-7 shrink-0 flex-col self-start border border-[#c8c8c8] bg-[#fafafa] text-[#333]">
      {SIDE_ICONS.map(({ name, icon }, i) => (
        <button
          key={name}
          type="button"
          aria-label={name}
          className={clsx(
            "flex items-center justify-center",
            i === 1 ? "h-[23px] border-b border-[#c8c8c8]" : i === 12 ? "mx-0.5 my-px h-5 rounded border border-[#b4b4b4] bg-[#ededed]" : "h-[22px]"
          )}
        >
          {icon}
        </button>
      ))}
    </nav>
  );
}

export default function App() {
  return (
    <div className="flex min-h-screen border-r-2 border-l border-r-[#9aa3ad] border-l-[#b4b4b4] [font-family:'Noto_Sans_Mono_CJK_KR','Noto_Sans_CJK_KR',monospace] text-[13px] text-black">
      <div className="flex min-w-0 flex-1 flex-col border-r-2 border-l border-[#666] bg-[#dcdbd6]">
        <TitleBar />
        <Toolbars />
        <div className="flex min-h-0 flex-1 px-[6px] pb-[5px]">
          <SidePanel />
          <div className="w-[6px] shrink-0" />
          <ChartPanel />
          <div className="w-[6px] shrink-0" />
          <IconRail />
        </div>
      </div>
    </div>
  );
}
